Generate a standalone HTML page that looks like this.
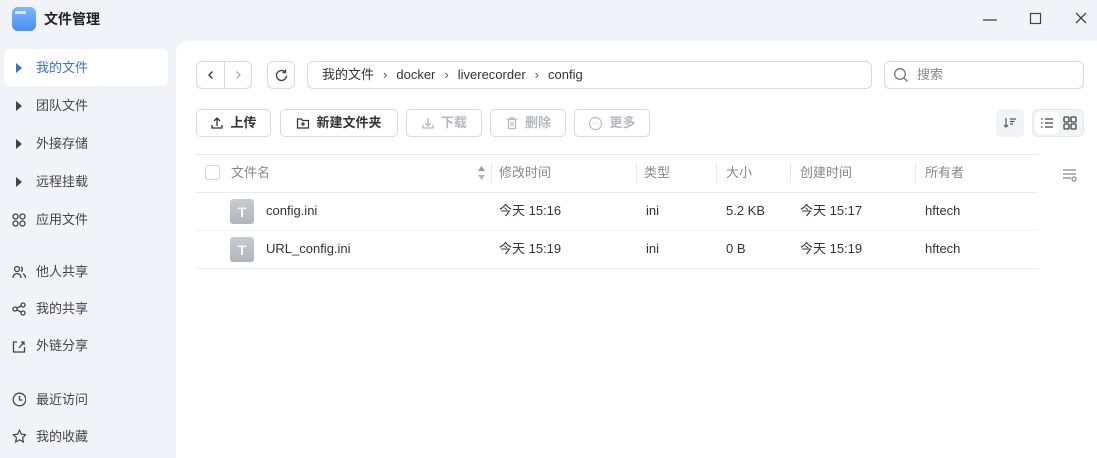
<!DOCTYPE html><html><head><meta charset="utf-8"><style>
*{box-sizing:border-box;margin:0;padding:0}
body{width:1097px;height:458px;background:#f2f3f8;font-family:"Liberation Sans","Noto Sans CJK SC",sans-serif;font-size:13px;line-height:18px;color:#333;position:relative;overflow:hidden}
.a{position:absolute}
.item{position:absolute;left:4px;width:164px;height:37px;display:flex;align-items:center;padding-left:8px;color:#444;font-size:13px}
.item .ic{width:14px;display:inline-flex;justify-content:center;margin-right:10px}
.item.act{background:#fff;border-radius:6px;color:#3a6fd8}
.tri{width:0;height:0;border-top:5px solid transparent;border-bottom:5px solid transparent;border-left:6px solid #444}
.main{left:176px;top:41px;width:921px;height:417px;background:#fff;border-top-left-radius:12px}
.btn{position:absolute;height:28px;border:1px solid #d6dae3;border-radius:5px;display:flex;align-items:center;justify-content:center;font-weight:bold;color:#333;background:#fff;gap:6px}
.btn.dis{color:#b4b9c4}
.hl{position:absolute;left:196px;width:842px;height:1px;background:#e8eaf0}
.th{position:absolute;top:164px;color:#888;font-size:13px;line-height:18px}
.sep{position:absolute;top:163px;width:1px;height:20px;background:#e5e7ec}
.td{position:absolute;font-size:13px;color:#333;line-height:18px}
.fi{position:absolute;left:230px;width:24px;height:25px;border-radius:3px;background:linear-gradient(#c7cbd2,#b1b6be);color:#fff;font-weight:bold;font-size:14px;display:flex;align-items:center;justify-content:center}
</style></head><body>
<div class="a" style="left:12px;top:7px;width:24px;height:24px;border-radius:6px;background:linear-gradient(#7db7ff,#4a8df0)"><div style="position:absolute;left:3px;top:4px;width:11px;height:3px;background:#d6e9ff;border-radius:1px"></div></div>
<div class="a" style="left:44px;top:10px;font-weight:bold;font-size:14px;color:#222">文件管理</div>
<svg class="a" style="left:980px;top:12px" width="20" height="16"><line x1="3" y1="8" x2="17" y2="8" stroke="#444" stroke-width="1.3"/></svg>
<svg class="a" style="left:1026px;top:10px" width="20" height="20"><rect x="4.5" y="3.5" width="10" height="10" fill="none" stroke="#444" stroke-width="1.2"/></svg>
<svg class="a" style="left:1072px;top:10px" width="20" height="20"><path d="M4 3L14 13M14 3L4 13" stroke="#444" stroke-width="1.3"/></svg>

<div class="item act" style="top:49px"><span class="ic"><span class="tri" style="border-left-color:#3a6fd8"></span></span>我的文件</div>
<div class="item" style="top:87px"><span class="ic"><span class="tri"></span></span>团队文件</div>
<div class="item" style="top:125px"><span class="ic"><span class="tri"></span></span>外接存储</div>
<div class="item" style="top:163px"><span class="ic"><span class="tri"></span></span>远程挂载</div>
<div class="item" style="top:201px"><span class="ic"><svg width="14" height="14" fill="none" stroke="#444" stroke-width="1.3"><circle cx="3.5" cy="3.5" r="2.5"/><circle cx="10.5" cy="3.5" r="2.5"/><circle cx="3.5" cy="10.5" r="2.5"/><circle cx="10.5" cy="10.5" r="2.5"/></svg></span>应用文件</div>
<div class="item" style="top:253px"><span class="ic"><svg width="14" height="14" fill="none" stroke="#444" stroke-width="1.3"><circle cx="5" cy="4" r="2.5"/><path d="M1 13c0-3 2-4.5 4-4.5s4 1.5 4 4.5M9 2a2.5 2.5 0 010 4.5M11 9c1.5.5 2.5 2 2.5 4"/></svg></span>他人共享</div>
<div class="item" style="top:290px"><span class="ic"><svg width="14" height="14" fill="none" stroke="#444" stroke-width="1.3"><circle cx="3" cy="7" r="2"/><circle cx="11" cy="3" r="2"/><circle cx="11" cy="11" r="2"/><path d="M5 6l4-2M5 8l4 2"/></svg></span>我的共享</div>
<div class="item" style="top:327px"><span class="ic"><svg width="14" height="14" fill="none" stroke="#444" stroke-width="1.3"><path d="M5 3H1.5v10h11V8M7 9l5-6M9 3h3v3"/></svg></span>外链分享</div>
<div class="item" style="top:381px"><span class="ic"><svg width="15" height="15" fill="none" stroke="#444" stroke-width="1.3"><circle cx="7.5" cy="7.5" r="6.3"/><path d="M7.5 4v4h3"/></svg></span>最近访问</div>
<div class="item" style="top:418px"><span class="ic"><svg width="15" height="15" fill="none" stroke="#444" stroke-width="1.2"><path d="M7.5 1.2l1.9 4 4.3.5-3.2 3 .9 4.3-3.9-2.2-3.9 2.2.9-4.3-3.2-3 4.3-.5z"/></svg></span>我的收藏</div>

<div class="a main"></div>
<div class="a" style="left:196px;top:61px;width:56px;height:28px;border:1px solid #d6dae3;border-radius:6px"><div style="position:absolute;left:27px;top:0;width:1px;height:26px;background:#d6dae3"></div>
<svg style="position:absolute;left:8px;top:7px" width="12" height="12"><path d="M7.5 2.5L4 6l3.5 3.5" fill="none" stroke="#333" stroke-width="1.3"/></svg>
<svg style="position:absolute;left:35px;top:7px" width="12" height="12"><path d="M4.5 2.5L8 6l-3.5 3.5" fill="none" stroke="#aaa" stroke-width="1.3"/></svg></div>
<div class="a" style="left:267px;top:61px;width:28px;height:28px;border:1px solid #d6dae3;border-radius:6px"><svg style="position:absolute;left:6px;top:6px" width="15" height="15" fill="none" stroke="#444" stroke-width="1.4"><path d="M12.5 7.5a5 5 0 11-1.5-3.6"/><path d="M11.5 1.5v3h-3"/></svg></div>
<div class="a" style="left:307px;top:61px;width:565px;height:28px;border:1px solid #d6dae3;border-radius:6px;display:flex;align-items:center;padding-left:14px;color:#333;font-size:13px">我的文件<span style="margin:0 9px;color:#555">›</span>docker<span style="margin:0 9px;color:#555">›</span>liverecorder<span style="margin:0 9px;color:#555">›</span>config</div>
<div class="a" style="left:884px;top:61px;width:200px;height:28px;border:1px solid #d6dae3;border-radius:6px;display:flex;align-items:center;padding-left:8px;color:#888"><svg width="16" height="16" fill="none" stroke="#777" stroke-width="1.3" style="margin-right:8px"><circle cx="7" cy="7" r="5.3"/><path d="M11 11l3.5 3.5"/></svg>搜索</div>

<div class="btn" style="left:196px;top:109px;width:75px"><svg width="14" height="14" fill="none" stroke="#333" stroke-width="1.3"><path d="M7 10V2M4 5l3-3 3 3M2 9v3h10V9"/></svg>上传</div>
<div class="btn" style="left:280px;top:109px;width:118px"><svg width="14" height="14" fill="none" stroke="#333" stroke-width="1.2"><path d="M1.5 3h4l1 1.5h6v7.5h-11z M7 6v4M5 8h4"/></svg>新建文件夹</div>
<div class="btn dis" style="left:406px;top:109px;width:76px"><svg width="14" height="14" fill="none" stroke="#b4b9c4" stroke-width="1.3"><path d="M7 2v8M4 7l3 3 3-3M2 9v3h10V9"/></svg>下载</div>
<div class="btn dis" style="left:490px;top:109px;width:76px"><svg width="14" height="14" fill="none" stroke="#b4b9c4" stroke-width="1.2"><path d="M2 3.5h10M5 3.5V2h4v1.5M3.5 3.5v9h7v-9M6 6v4M8 6v4"/></svg>删除</div>
<div class="btn dis" style="left:574px;top:109px;width:76px"><svg width="15" height="15" fill="none" stroke="#b4b9c4" stroke-width="1.2"><circle cx="7.5" cy="7.5" r="6"/><path d="M5 7.5h.5M7.3 7.5h.5M9.6 7.5h.5" stroke-width="1.5"/></svg>更多</div>
<div class="a" style="left:996px;top:109px;width:28px;height:28px;background:#f2f3f6;border-radius:5px"><svg style="position:absolute;left:7px;top:7px" width="14" height="14" fill="none" stroke="#555" stroke-width="1.2"><path d="M3 2v9M1 9l2 2 2-2M7 3h6M7 5.5h4.5M7 8h3"/></svg></div>
<div class="a" style="left:1032px;top:109px;width:52px;height:28px;background:#f2f3f6;border-radius:6px;border:1px solid #e6e8ee"><div style="position:absolute;left:2px;top:2px;width:24px;height:22px;background:#fff;border-radius:5px"></div>
<svg style="position:absolute;left:7px;top:6px" width="14" height="14" fill="none" stroke="#444" stroke-width="1.3"><path d="M1 3h1.5M1 7h1.5M1 11h1.5M5 3h8M5 7h8M5 11h8"/></svg>
<svg style="position:absolute;left:30px;top:6px" width="14" height="14" fill="none" stroke="#444" stroke-width="1.3"><rect x="1" y="1" width="5" height="5" rx="1"/><rect x="8" y="1" width="5" height="5" rx="1"/><rect x="1" y="8" width="5" height="5" rx="1"/><rect x="8" y="8" width="5" height="5" rx="1"/></svg></div>

<div class="hl" style="top:154px"></div>
<div class="hl" style="top:192px"></div>
<div class="hl" style="top:230px;background:#f0f1f4"></div>
<div class="hl" style="top:268px;background:#f0f1f4"></div>
<div class="a" style="left:205px;top:165px;width:15px;height:15px;border:1px solid #cfd3db;border-radius:3px"></div>
<div class="th" style="left:231px">文件名</div>
<svg class="a" style="left:477px;top:165px" width="9" height="16"><path d="M4.5 1L8 6H1z" fill="#999"/><path d="M4.5 15L8 10H1z" fill="#aab4c8"/></svg>
<div class="sep" style="left:491px"></div><div class="th" style="left:499px">修改时间</div>
<div class="sep" style="left:636px"></div><div class="th" style="left:644px">类型</div>
<div class="sep" style="left:716px"></div><div class="th" style="left:726px">大小</div>
<div class="sep" style="left:790px"></div><div class="th" style="left:800px">创建时间</div>
<div class="sep" style="left:915px"></div><div class="th" style="left:925px">所有者</div>
<svg class="a" style="left:1062px;top:167px" width="16" height="16" fill="none" stroke="#888" stroke-width="1.2"><path d="M1 3h13M1 7h13M1 11h8"/><circle cx="12" cy="12" r="2"/></svg>

<div class="fi" style="top:199px">T</div>
<div class="td" style="left:266px;top:202px">config.ini</div>
<div class="td" style="left:499px;top:202px">今天 15:16</div>
<div class="td" style="left:646px;top:202px">ini</div>
<div class="td" style="left:726px;top:202px">5.2 KB</div>
<div class="td" style="left:800px;top:202px">今天 15:17</div>
<div class="td" style="left:925px;top:202px">hftech</div>
<div class="fi" style="top:237px">T</div>
<div class="td" style="left:266px;top:240px">URL_config.ini</div>
<div class="td" style="left:499px;top:240px">今天 15:19</div>
<div class="td" style="left:646px;top:240px">ini</div>
<div class="td" style="left:726px;top:240px">0 B</div>
<div class="td" style="left:800px;top:240px">今天 15:19</div>
<div class="td" style="left:925px;top:240px">hftech</div>
</body></html>
